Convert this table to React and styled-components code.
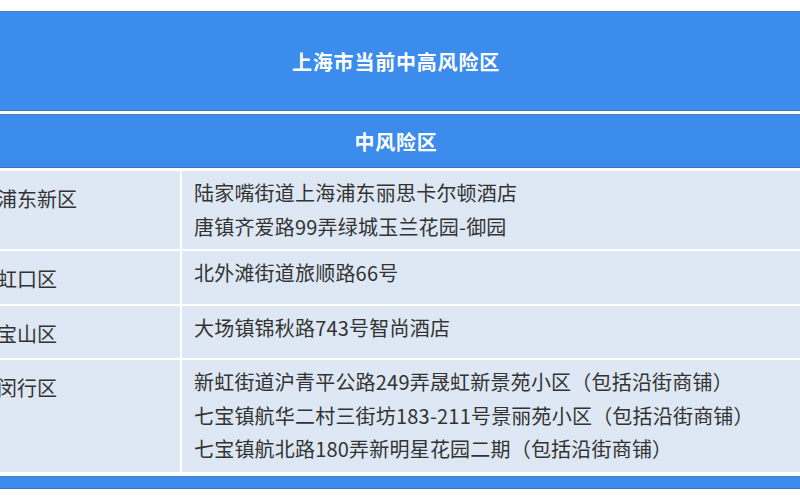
import React from 'react';
import styled, { createGlobalStyle } from 'styled-components';

const GlobalStyle = createGlobalStyle`
  html, body {
    margin: 0;
    padding: 0;
    background: #ffffff;
    overflow: hidden;
  }
  body {
    font-family: "Noto Sans CJK SC", "Noto Sans", sans-serif;
  }
`;

const Page = styled.div`
  width: 800px;
  height: 500px;
  overflow: hidden;
  padding-top: 11px;
  box-sizing: border-box;
`;

const Table = styled.div`
  margin-left: -15px;
  width: 822px;
  display: flex;
  flex-direction: column;
  gap: 3px;
`;

const HeaderBar = styled.div`
  background-color: #3b8cec;
  border-top: 1px solid #4f7fbf;
  border-bottom: 1px solid #3a74c4;
  color: #ffffff;
  font-weight: 700;
  font-size: 20px;
  height: ${(p) => p.height}px;
  display: flex;
  align-items: center;
  justify-content: center;
  box-sizing: border-box;
  letter-spacing: 0.8px;
`;

const Body = styled.div`
  display: flex;
  flex-direction: column;
  gap: 2px;
`;

const Row = styled.div`
  display: grid;
  grid-template-columns: 195px 1fr;
  gap: 2px;
`;

const Cell = styled.div`
  background-color: #dde8f4;
  color: #333333;
  font-size: 20px;
  line-height: 33.5px;
`;

const DistrictCell = styled(Cell)`
  padding: 11px 0 8px 12px;
`;

const AddressCell = styled(Cell)`
  padding: 5px 0 6px 12px;
`;

const Line = styled.div`
  white-space: nowrap;
  letter-spacing: 0.2px;
`;

const FooterBar = styled.div`
  height: 13px;
  margin-top: 2px;
  background-color: #3b8cec;
  border-top: 1px solid #4f86c6;
  border-bottom: 1px solid #3a74c4;
  box-sizing: border-box;
`;

const rows = [
  {
    district: '浦东新区',
    places: ['陆家嘴街道上海浦东丽思卡尔顿酒店', '唐镇齐爱路99弄绿城玉兰花园-御园'],
  },
  { district: '虹口区', places: ['北外滩街道旅顺路66号'] },
  { district: '宝山区', places: ['大场镇锦秋路743号智尚酒店'] },
  {
    district: '闵行区',
    places: [
      '新虹街道沪青平公路249弄晟虹新景苑小区（包括沿街商铺）',
      '七宝镇航华二村三街坊183-211号景丽苑小区（包括沿街商铺）',
      '七宝镇航北路180弄新明星花园二期（包括沿街商铺）',
    ],
  },
];

const App = () => {
  return (
    <Page>
      <GlobalStyle />
      <Table>
        <HeaderBar height={100}>上海市当前中高风险区</HeaderBar>
        <HeaderBar height={54}>中风险区</HeaderBar>
        <Body>
          {rows.map((row) => (
            <Row key={row.district}>
              <DistrictCell>{row.district}</DistrictCell>
              <AddressCell>
                {row.places.map((place) => (
                  <Line key={place}>{place}</Line>
                ))}
              </AddressCell>
            </Row>
          ))}
          <FooterBar />
        </Body>
      </Table>
    </Page>
  );
};

export default App;
